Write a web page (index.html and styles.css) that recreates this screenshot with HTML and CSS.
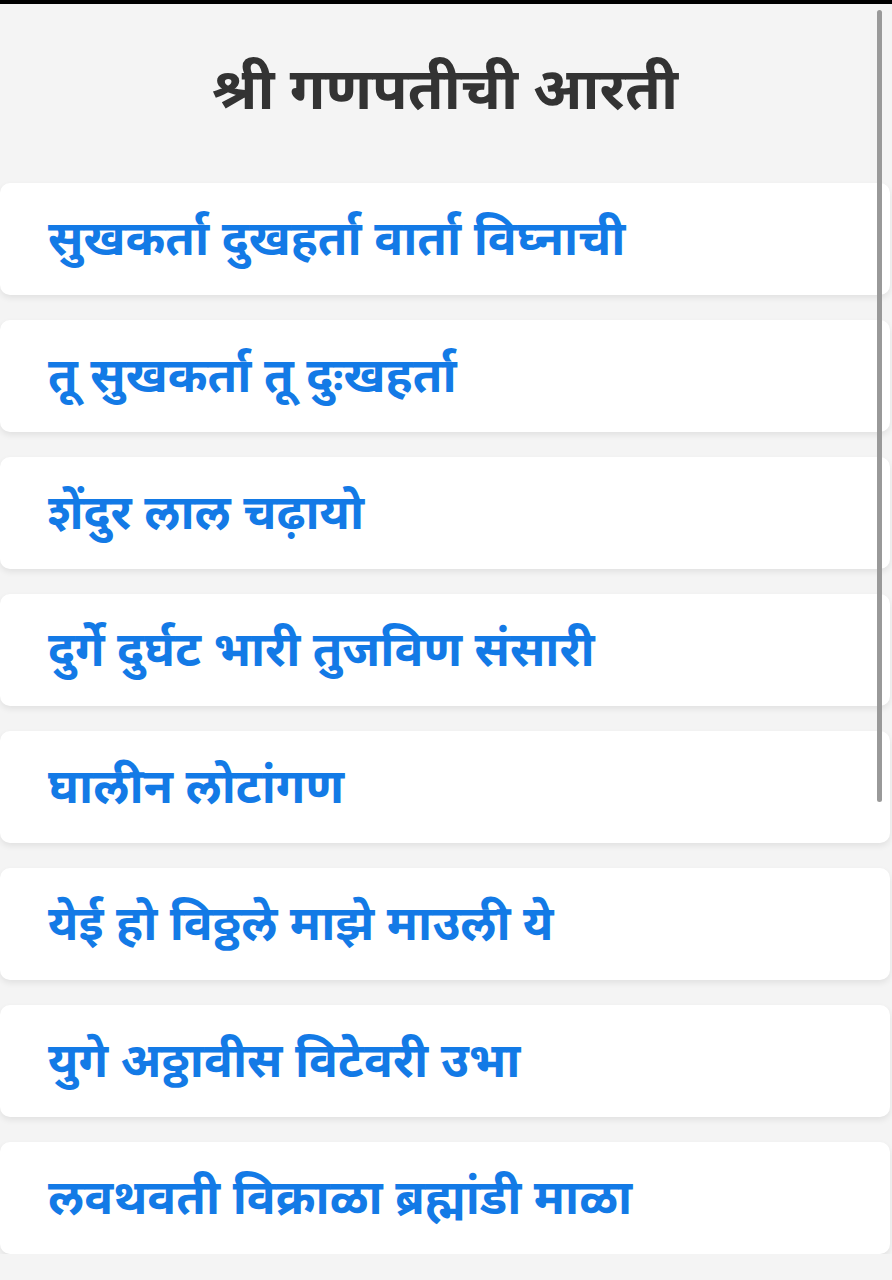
FILE: index.html
```html
<!DOCTYPE html>
<html lang="mr">
<head>
<meta charset="utf-8">
<title>श्री गणपतीची आरती</title>
<link rel="stylesheet" href="styles.css">
</head>
<body>
<div class="topbar"></div>
<main class="page">
  <h1 class="title">श्री गणपतीची आरती</h1>
  <ul class="list">
    <li class="card">सुखकर्ता दुखहर्ता वार्ता विघ्नाची</li>
    <li class="card">तू सुखकर्ता तू दुःखहर्ता</li>
    <li class="card">शेंदुर लाल चढ़ायो</li>
    <li class="card">दुर्गे दुर्घट भारी तुजविण संसारी</li>
    <li class="card">घालीन लोटांगण</li>
    <li class="card">येई हो विठ्ठले माझे माउली ये</li>
    <li class="card">युगे अठ्ठावीस विटेवरी उभा</li>
    <li class="card">लवथवती विक्राळा ब्रह्मांडी माळा</li>
  </ul>
</main>
<div class="scrollbar"></div>
</body>
</html>
```
FILE: styles.css
```css
html, body {
  margin: 0;
  padding: 0;
  background: #f4f4f4;
  font-family: "Noto Sans", "Lato", sans-serif;
}
.topbar {
  height: 4px;
  background: #000;
}
.page {
  padding: 0 2px 0 0;
}
.title {
  margin: 0;
  height: 179px;
  display: flex;
  align-items: center;
  justify-content: center;
  padding-bottom: 14px;
  box-sizing: border-box;
  font-size: 58px;
  font-weight: 700;
  color: #333;
}
.list {
  list-style: none;
  margin: 0;
  padding: 0;
  display: flex;
  flex-direction: column;
  gap: 25px;
}
.card {
  background: #fff;
  border-radius: 10px;
  height: 112px;
  display: flex;
  align-items: center;
  padding-left: 48px;
  padding-bottom: 6px;
  box-sizing: border-box;
  font-size: 48px;
  font-weight: 700;
  color: #137ae6;
  box-shadow: 0 3px 6px rgba(0,0,0,0.08);
}
.scrollbar {
  position: absolute;
  top: 10px;
  left: 877px;
  width: 5px;
  height: 792px;
  border-radius: 3px;
  background: #999;
}
```
